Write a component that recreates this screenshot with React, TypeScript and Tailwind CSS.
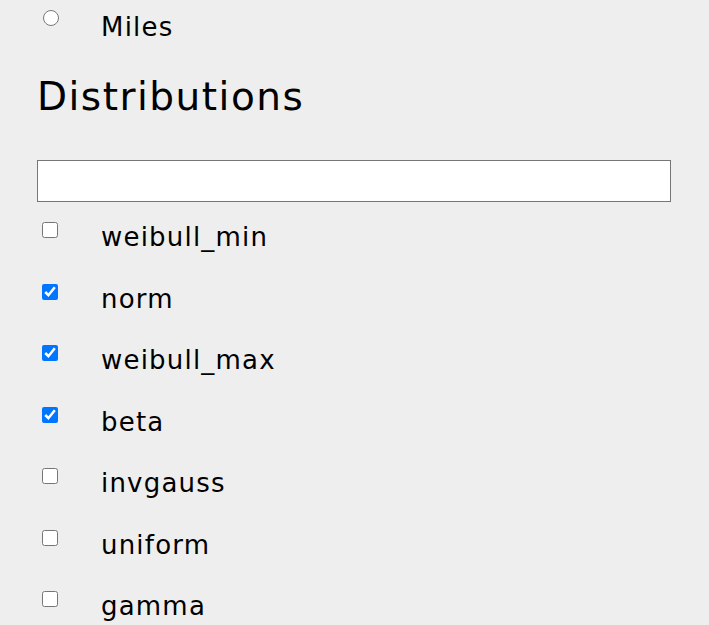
import React from "react";

const items: { name: string; checked: boolean }[] = [
  { name: "weibull_min", checked: false },
  { name: "norm", checked: true },
  { name: "weibull_max", checked: true },
  { name: "beta", checked: true },
  { name: "invgauss", checked: false },
  { name: "uniform", checked: false },
  { name: "gamma", checked: false },
];

export default function App() {
  return (
    <div className="min-h-[625px] w-full overflow-hidden bg-[#eeeeee] pl-[37px] pr-[38px] font-['DejaVu_Sans',sans-serif] text-black">
      <div className="flex h-[48px] items-start">
        <input type="radio" name="unit" className="ml-[6px] mt-[10px] h-[16px] w-[16px]" />
        <span className="ml-[42px] mt-[10px] text-[26px] leading-[34px] tracking-[1.2px]">Miles</span>
      </div>
      <h2 className="mt-[24px] text-[39px] leading-[50px] tracking-[1.5px]">Distributions</h2>
      <input type="text" className="mt-[38px] block h-[42px] w-full border border-[#767676] bg-white" />
      <div className="mt-[17px] flex flex-col">
        {items.map((it) => (
          <div key={it.name} className="flex h-[61.5px] items-start">
            <input type="checkbox" defaultChecked={it.checked} className="ml-[5px] mt-[3px] h-[16px] w-[16px]" />
            <span className="ml-[43px] mt-[1px] text-[26px] leading-[34px] tracking-[1.2px]">{it.name}</span>
          </div>
        ))}
      </div>
    </div>
  );
}
